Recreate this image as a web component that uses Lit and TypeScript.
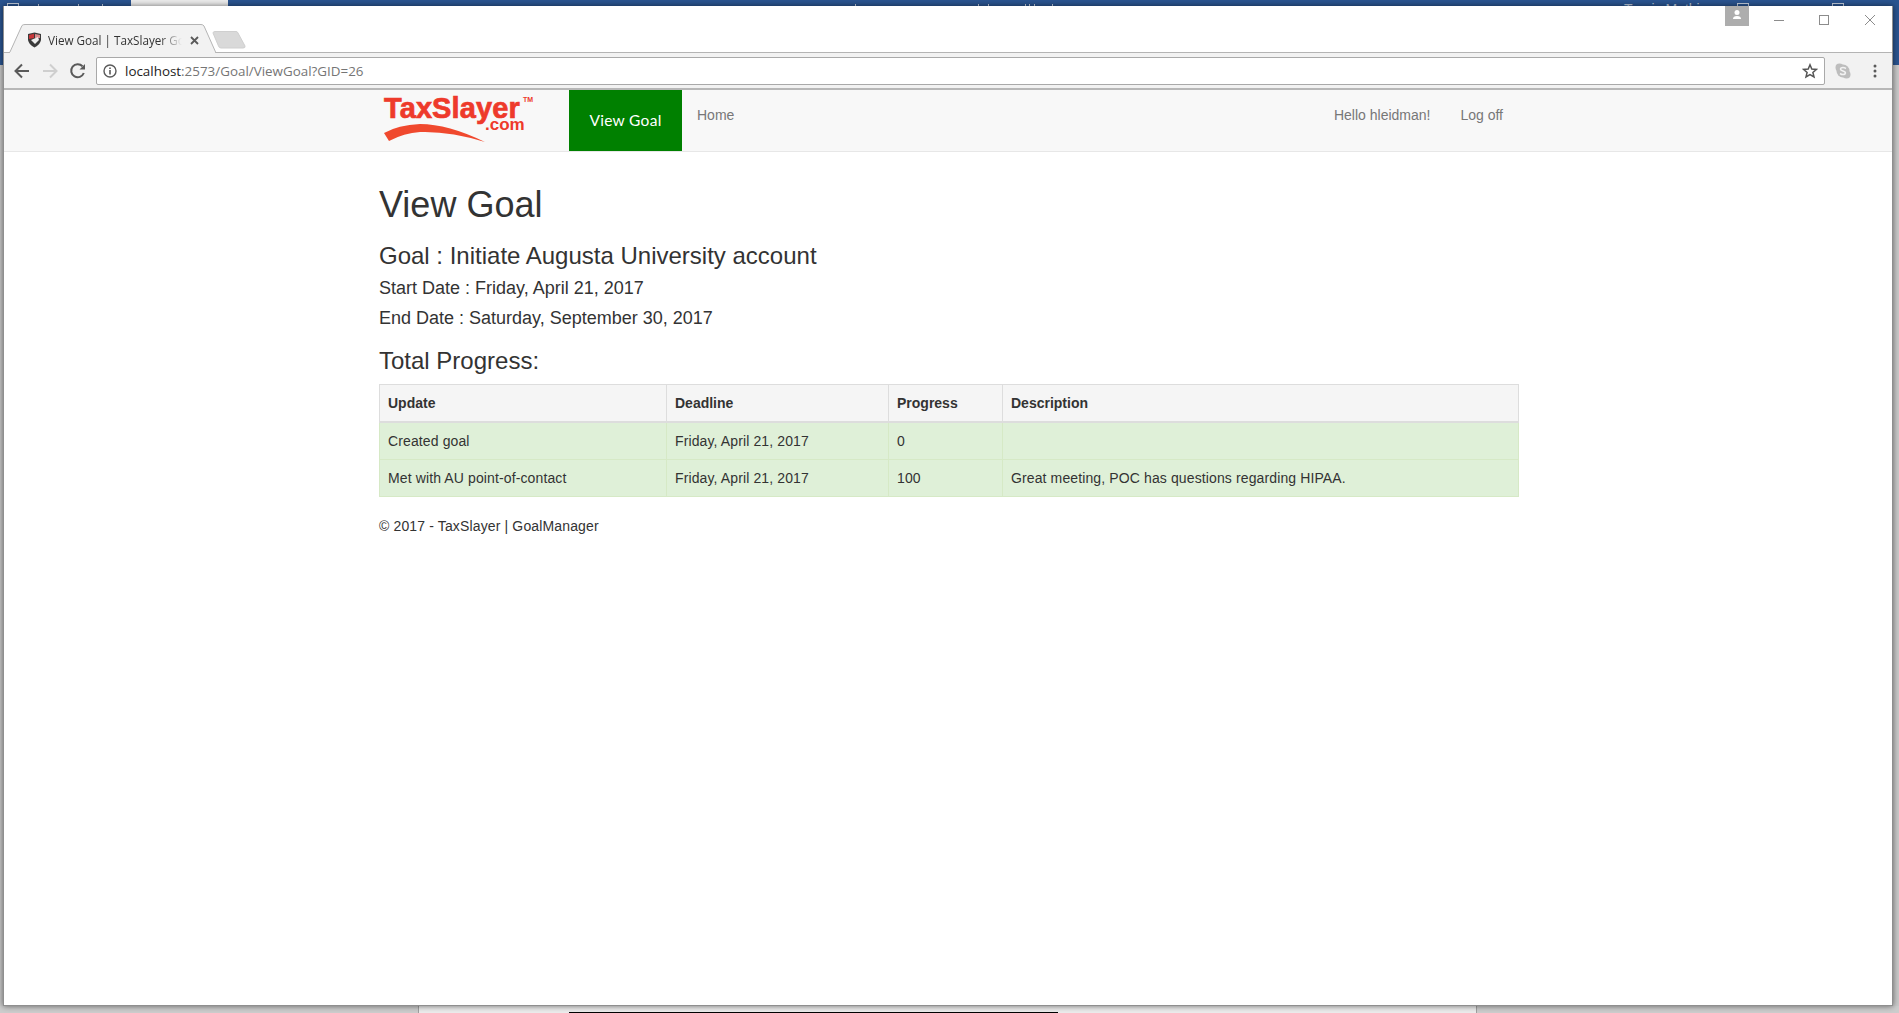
import {LitElement, css, html} from 'lit';
import {customElement} from 'lit/decorators.js';

const rows = [
  {update: 'Created goal', deadline: 'Friday, April 21, 2017', progress: '0', description: ''},
  {
    update: 'Met with AU point-of-contact',
    deadline: 'Friday, April 21, 2017',
    progress: '100',
    description: 'Great meeting, POC has questions regarding HIPAA.',
  },
];

// tops of the letters of the window behind, only a few pixels of them show
const stripTicks = [38, 78, 102, 855, 978, 988, 1025, 1029, 1034, 1052];

@customElement('app-root')
export class AppRoot extends LitElement {
  static override styles = css`
    :host {
      display: block;
      width: 1899px;
      height: 1013px;
      overflow: hidden;
      font-family: 'Liberation Sans', Arial, sans-serif;
      font-size: 14px;
      line-height: 20px;
      color: #333;
    }

    .desktop {
      display: flex;
      flex-direction: column;
      height: 100%;
    }

    .strip {
      position: relative;
      flex: none;
      height: 6px;
      background: #2a5490;
      overflow: hidden;
    }
    .strip-tab {
      position: absolute;
      left: 131px;
      top: 0;
      width: 97px;
      height: 6px;
      background: #ececec;
    }
    .strip-name {
      position: absolute;
      left: 1624px;
      top: -1px;
      font-size: 14px;
      color: #b9c6da;
      white-space: nowrap;
    }
    .strip-mark {
      position: absolute;
      top: 3px;
      height: 3px;
      width: 12px;
      border: 1px solid #c3cede;
      border-bottom: none;
      box-sizing: border-box;
    }
    .strip-tick {
      position: absolute;
      top: 4px;
      width: 1px;
      height: 2px;
      background: #c3cede;
    }

    .middle {
      flex: 1;
      display: flex;
      min-height: 0;
      padding: 0 6px 0 3px;
      background: linear-gradient(#2a5490 0 59px, #c9c9c9 59px);
    }

    .window {
      position: relative;
      z-index: 1;
      flex: 1;
      display: flex;
      flex-direction: column;
      min-width: 0;
      background: #fff;
      border: 1px solid #8f8f8f;
      border-top: none;
      box-shadow: 0 0 6px rgba(0, 0, 0, 0.55);
    }

    .dock {
      flex: none;
      display: flex;
      height: 7px;
      background: #cdcdcd;
    }
    .dock-light {
      width: 1059px;
      margin-left: 418px;
      background: #ececec;
      border-left: 1px solid #a0a0a0;
      border-right: 1px solid #a0a0a0;
      box-sizing: border-box;
    }
    .dock-bar {
      width: 489px;
      height: 1px;
      margin: 6px 0 0 150px;
      background: #000;
    }

    /* browser chrome */
    .tabstrip {
      position: relative;
      flex: none;
      height: 46px;
      background: #fff;
      border-bottom: 1px solid #b4b4b4;
    }
    .tab-shape {
      position: absolute;
      left: 0;
      top: 0;
    }
    .tab {
      position: absolute;
      left: 23px;
      top: 23px;
      display: flex;
      align-items: center;
      gap: 6px;
      height: 22px;
      font-family: 'Open Sans', sans-serif;
      font-size: 11.7px;
      color: #333;
    }
    .tab-title {
      width: 134px;
      overflow: hidden;
      white-space: nowrap;
      -webkit-mask-image: linear-gradient(90deg, #000 112px, transparent 134px);
      mask-image: linear-gradient(90deg, #000 112px, transparent 134px);
    }
    .tab-close {
      margin-left: 2px;
    }
    .avatar {
      position: absolute;
      left: 1721px;
      top: 0;
      width: 24px;
      height: 20px;
      background: #adadad;
    }
    .winctl {
      position: absolute;
      top: 8px;
      left: 1770px;
    }

    .toolbar {
      flex: none;
      display: flex;
      align-items: center;
      height: 37px;
      background: #f2f2f2;
      border-bottom: 2px solid #b7b7b7;
      box-sizing: border-box;
      padding: 0 0 0 8px;
    }
    .nav-icons {
      display: flex;
      gap: 8px;
      width: 84px;
      flex: none;
    }
    .omnibox {
      display: flex;
      align-items: center;
      width: 1729px;
      height: 28px;
      box-sizing: border-box;
      flex: none;
      background: #fff;
      border: 1px solid #a9a9a9;
      border-radius: 2px;
      padding: 0 6px;
      font-family: 'Open Sans', sans-serif;
      font-size: 13.4px;
    }
    .omnibox .host {
      color: #222;
      margin-left: 8px;
    }
    .omnibox .path {
      color: #757575;
    }
    .omnibox .star {
      margin-left: auto;
    }
    .tool-right {
      display: flex;
      align-items: center;
      gap: 21px;
      margin-left: 9px;
    }

    /* the page itself */
    .page {
      flex: 1;
      min-height: 0;
    }

    .navbar {
      display: flex;
      height: 61px;
      padding: 0 374px 0 380px;
      background: #f8f8f8;
      border-bottom: 1px solid #e7e7e7;
    }
    .logo {
      position: relative;
      flex: none;
      width: 185px;
    }
    .logo-name {
      position: absolute;
      left: 0;
      top: 1px;
      font-size: 29px;
      line-height: 34px;
      font-weight: bold;
      letter-spacing: 0.1px;
      color: #ee3a2b;
      -webkit-text-stroke: 0.7px #ee3a2b;
      white-space: nowrap;
    }
    .logo-com {
      position: absolute;
      left: 101px;
      top: 26px;
      font-size: 17px;
      line-height: 18px;
      font-weight: bold;
      color: #ee3a2b;
    }
    .logo-tm {
      position: absolute;
      left: 139px;
      top: 6px;
      font-size: 7px;
      line-height: 8px;
      font-weight: bold;
      color: #ee3a2b;
    }
    .logo-swoosh {
      position: absolute;
      left: 0;
      top: 30px;
    }
    .brand {
      flex: none;
      width: 113px;
      text-align: center;
      background: #008000;
      color: #fff;
      font-family: Lato, sans-serif;
      font-size: 15.5px;
      letter-spacing: 0.3px;
      line-height: 61px;
    }
    .nav-link {
      padding: 15px;
      color: #777;
    }
    .nav-spacer {
      flex: 1;
    }
    .nav-right {
      display: flex;
    }

    .container {
      width: 1140px;
      margin-left: 375px;
    }
    h1,
    h3,
    h4 {
      font-weight: 500;
      line-height: 1.1;
      margin: 0;
    }
    h1 {
      font-size: 36px;
      margin-top: 33px;
    }
    h3 {
      font-size: 24px;
      margin-top: 18px;
    }
    h4 {
      font-size: 18px;
      margin-top: 10px;
    }
    h3.total {
      margin-top: 19px;
    }

    table {
      width: 1140px;
      margin-top: 10px;
      border-collapse: collapse;
      table-layout: fixed;
      border: 1px solid #ddd;
    }
    th,
    td {
      box-sizing: border-box;
      padding: 8px;
      text-align: left;
      vertical-align: top;
      border: 1px solid #ddd;
    }
    th {
      font-weight: bold;
      background: #f5f5f5;
      border-bottom-width: 2px;
    }
    td {
      background: #dff0d8;
      border-color: #d6e9c6;
      letter-spacing: 0.12px;
    }
    .col-update {
      width: 287px;
    }
    .col-deadline {
      width: 222px;
    }
    .col-progress {
      width: 114px;
    }

    footer {
      margin-top: 19px;
      letter-spacing: 0.14px;
    }
  `;

  override render() {
    return html`
      <div class="desktop">
        <div class="strip">
          <div class="strip-tab"></div>
          <span class="strip-mark" style="left: 7px"></span>
          <span class="strip-mark" style="left: 1737px"></span>
          <span class="strip-mark" style="left: 1832px"></span>
          ${stripTicks.map((x) => html`<span class="strip-tick" style="left: ${x}px"></span>`)}
          <span class="strip-name">Travis Mathis</span>
        </div>
        <div class="middle">
          <div class="window">
            ${this.renderTabstrip()} ${this.renderToolbar()}
            <div class="page">
              ${this.renderNavbar()}
              <div class="container">
                <h1>View Goal</h1>
                <h3>Goal : Initiate Augusta University account</h3>
                <h4>Start Date : Friday, April 21, 2017</h4>
                <h4>End Date : Saturday, September 30, 2017</h4>
                <h3 class="total">Total Progress:</h3>
                <table>
                  <thead>
                    <tr>
                      <th class="col-update">Update</th>
                      <th class="col-deadline">Deadline</th>
                      <th class="col-progress">Progress</th>
                      <th>Description</th>
                    </tr>
                  </thead>
                  <tbody>
                    ${rows.map(
                      (r) => html`
                        <tr>
                          <td>${r.update}</td>
                          <td>${r.deadline}</td>
                          <td>${r.progress}</td>
                          <td>${r.description}</td>
                        </tr>
                      `
                    )}
                  </tbody>
                </table>
                <footer>© 2017 - TaxSlayer | GoalManager</footer>
              </div>
            </div>
          </div>
        </div>
        <div class="dock">
          <div class="dock-light"><div class="dock-bar"></div></div>
        </div>
      </div>
    `;
  }

  renderTabstrip() {
    return html`
      <div class="tabstrip">
        <svg class="tab-shape" width="250" height="47" viewBox="0 0 250 47">
          <path d="M5.5 47 L18 19.5 Q19 18.5 21 18.5 L197 18.5 Q199 18.5 200 20 L212 47 Z" fill="#f2f2f2" stroke="#b4b4b4" />
          <path d="M6 47 L211 47" stroke="#f2f2f2" stroke-width="2" />
          <path d="M209 27 Q209 25.5 211 25.5 L232 25.5 Q233.5 25.5 234 27 L241 40 Q241.5 42 239 42 L217 42 Q215 42 214.5 40 Z" fill="#d9d9d9" stroke="#cfcfcf" />
        </svg>
        <div class="tab">
          <svg width="15" height="16" viewBox="0 0 15 16">
            <path d="M1 2 L7.5 0.5 L14 2 L14 8 Q13 13 7.5 15.5 Q2 13 1 8 Z" fill="#3a3a3a" />
            <path d="M2 3 L7 1.8 L7 6 L2 7 Z" fill="#c8363a" />
            <path d="M8 2 L13 3 L13 6 L8 6 Z" fill="#d98b8d" />
            <path d="M4 8 L11 5 L12 8 L8 12 L6 10 Z" fill="#eeeeee" />
          </svg>
          <span class="tab-title">View Goal | TaxSlayer GoalManager</span>
          <svg class="tab-close" width="9" height="9" viewBox="0 0 9 9">
            <path d="M1 1 L8 8 M8 1 L1 8" stroke="#5a5a5a" stroke-width="1.8" />
          </svg>
        </div>
        <div class="avatar">
          <svg width="24" height="20" viewBox="0 0 24 20">
            <circle cx="12" cy="6.5" r="2.5" fill="#fff" />
            <path d="M8 13 Q8 10 12 10 Q16 10 16 13 Z" fill="#fff" />
          </svg>
        </div>
        <svg class="winctl" width="115" height="14" viewBox="0 0 115 14">
          <path d="M0 6.5 L10 6.5" stroke="#8c8c8c" />
          <rect x="45.5" y="1.5" width="9" height="9" fill="none" stroke="#8c8c8c" />
          <path d="M91 1 L101 11 M101 1 L91 11" stroke="#8c8c8c" />
        </svg>
      </div>
    `;
  }

  renderToolbar() {
    return html`
      <div class="toolbar">
        <div class="nav-icons">
          <svg width="20" height="20" viewBox="0 0 20 20">
            <path d="M17 10 L4 10 M10 3.5 L3.5 10 L10 16.5" fill="none" stroke="#5a5a5a" stroke-width="2" />
          </svg>
          <svg width="20" height="20" viewBox="0 0 20 20">
            <path d="M3 10 L16 10 M10 3.5 L16.5 10 L10 16.5" fill="none" stroke="#cfcfcf" stroke-width="2" />
          </svg>
          <svg width="20" height="20" viewBox="0 0 20 20">
            <path d="M15.8 12 A6.5 6.5 0 1 1 14.5 5.3" fill="none" stroke="#5a5a5a" stroke-width="2" />
            <path d="M11.5 8.5 L17 8.5 L17 3 Z" fill="#5a5a5a" />
          </svg>
        </div>
        <div class="omnibox">
          <svg width="14" height="14" viewBox="0 0 14 14">
            <circle cx="7" cy="7" r="6" fill="none" stroke="#5a5a5a" stroke-width="1.4" />
            <path d="M7 6 L7 10.5 M7 3.5 L7 5" stroke="#5a5a5a" stroke-width="1.6" />
          </svg>
          <span class="host">localhost</span><span class="path">:2573/Goal/ViewGoal?GID=26</span>
          <svg class="star" width="16" height="16" viewBox="0 0 16 16">
            <path d="M8 1.8 L9.8 6 L14.4 6.4 L10.9 9.4 L12 13.9 L8 11.5 L4 13.9 L5.1 9.4 L1.6 6.4 L6.2 6 Z" fill="none" stroke="#555" stroke-width="1.5" />
          </svg>
        </div>
        <div class="tool-right">
          <svg width="18" height="18" viewBox="0 0 18 18">
            <circle cx="5.5" cy="5.5" r="4" fill="#bdbdbd" />
            <circle cx="12.5" cy="12.5" r="4" fill="#bdbdbd" />
            <circle cx="9" cy="9" r="6.5" fill="#bdbdbd" />
            <path d="M12 6.5 Q9 4.8 6.8 6.2 Q5.6 8 9 9 Q12.5 10 11 12 Q8.8 13.3 6 11.5" fill="none" stroke="#f2f2f2" stroke-width="1.5" />
          </svg>
          <svg width="4" height="14" viewBox="0 0 4 14">
            <circle cx="2" cy="2" r="1.5" fill="#5a5a5a" />
            <circle cx="2" cy="7" r="1.5" fill="#5a5a5a" />
            <circle cx="2" cy="12" r="1.5" fill="#5a5a5a" />
          </svg>
        </div>
      </div>
    `;
  }

  renderNavbar() {
    return html`
      <div class="navbar">
        <div class="logo">
          <span class="logo-name">TaxSlayer</span>
          <span class="logo-tm">TM</span>
          <span class="logo-com">.com</span>
          <svg class="logo-swoosh" width="110" height="24" viewBox="0 0 110 24">
            <path d="M0 13 Q14 5 36 4 Q64 4 101 22 Q66 11 36 12 Q20 13 5 21 Z" fill="#f0492e" />
          </svg>
        </div>
        <div class="brand">View Goal</div>
        <div class="nav-link">Home</div>
        <div class="nav-spacer"></div>
        <div class="nav-right">
          <div class="nav-link">Hello hleidman!</div>
          <div class="nav-link">Log off</div>
        </div>
      </div>
    `;
  }
}

declare global {
  interface HTMLElementTagNameMap {
    'app-root': AppRoot;
  }
}
